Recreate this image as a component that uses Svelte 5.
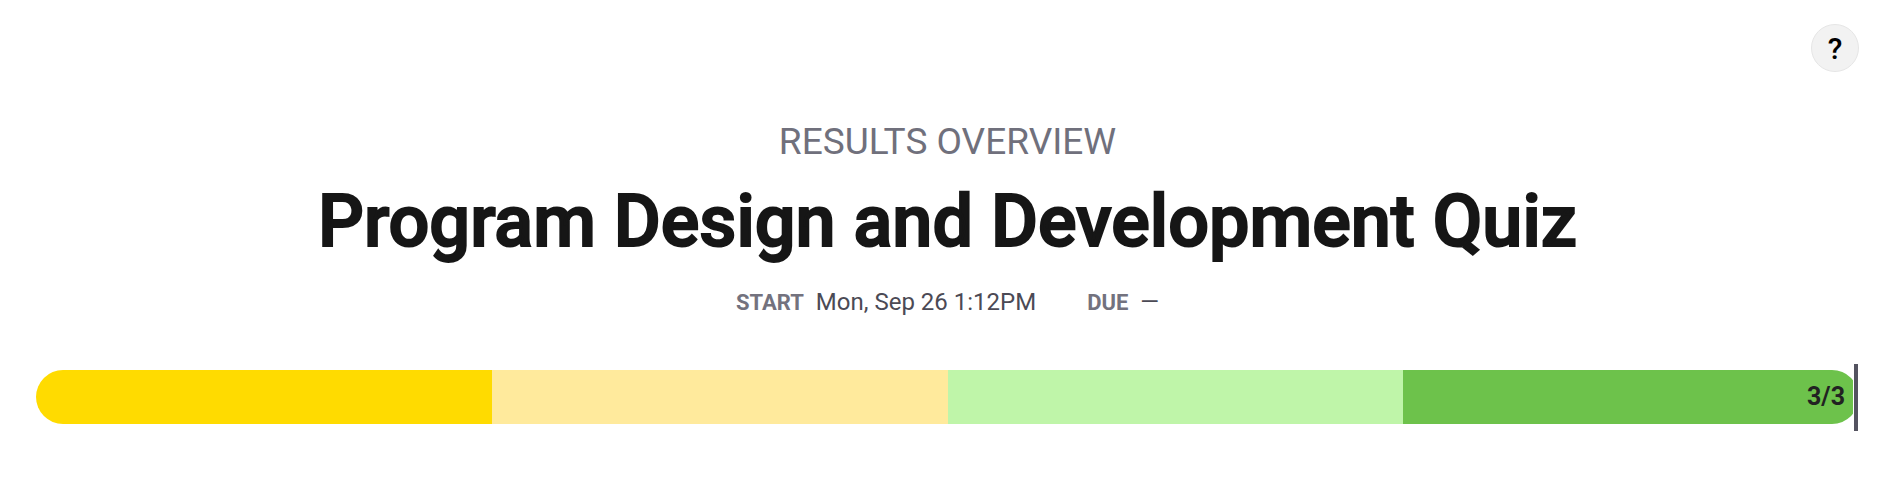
<script>
  const segments = ['#ffdb00', '#ffea9c', '#bff5a9', '#6dc24b'];
</script>

<main>
  <button class="help" aria-label="Help">?</button>
  <header>
    <p class="eyebrow">RESULTS OVERVIEW</p>
    <h1>Program Design and Development Quiz</h1>
    <dl>
      <div><dt>START</dt><dd>Mon, Sep 26 1:12PM</dd></div>
      <div><dt>DUE</dt><dd>—</dd></div>
    </dl>
  </header>
  <div class="score">
    <div class="bar">
      {#each segments as color}
        <span style="background: {color}"></span>
      {/each}
    </div>
    <strong>3/3</strong>
    <i class="marker"></i>
  </div>
</main>

<style>
  :global(body) { background: #fff; }
  main {
    font-family: Roboto, sans-serif;
    display: flex;
    flex-direction: column;
    padding: 24px 20px 36px 36px;
  }
  .help {
    box-sizing: border-box;
    align-self: flex-end;
    width: 48px;
    height: 48px;
    padding: 2px 0 0;
    border: 1px solid #e6e6e6;
    border-radius: 50%;
    background: #f2f2f2;
    color: #000;
    font: 500 30px/44px Roboto, sans-serif;
  }
  header {
    display: flex;
    flex-direction: column;
    align-items: center;
    padding-top: 49px;
  }
  p, h1, dl, dd { margin: 0; }
  .eyebrow { font-size: 37px; line-height: 42px; color: #70707c; }
  h1 {
    font-size: 72px;
    font-weight: 500;
    line-height: 84px;
    margin-top: 17px;
    color: #161616;
    -webkit-text-stroke: 2px #161616;
  }
  dl { display: flex; gap: 51px; margin-top: 24px; line-height: 28px; }
  dl div { display: flex; gap: 12px; align-items: baseline; }
  dt { font-size: 22px; font-weight: 700; color: #73727e; }
  dd { font-size: 24px; color: #4b4a55; }
  .score { position: relative; margin-top: 53px; }
  .bar { display: flex; height: 54px; border-radius: 27px; overflow: hidden; }
  .bar span { flex: 1; }
  strong {
    position: absolute;
    right: 14px;
    top: 0;
    font-size: 25px;
    font-weight: 700;
    line-height: 54px;
    color: #222;
  }
  .marker {
    position: absolute;
    right: 0;
    top: -6px;
    height: 67px;
    width: 4px;
    border: solid #fff;
    border-width: 0 1px;
    background: #545360;
  }
</style>
